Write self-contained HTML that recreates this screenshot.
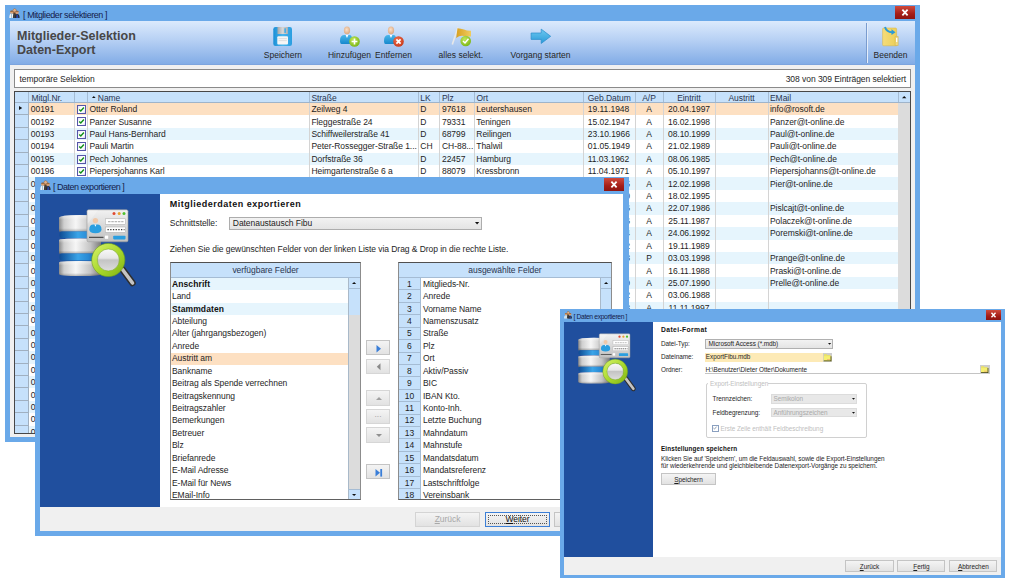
<!DOCTYPE html><html><head><meta charset="utf-8"><style>
*{margin:0;padding:0;box-sizing:border-box}
html,body{width:1010px;height:583px;overflow:hidden;background:#fff;font-family:"Liberation Sans", sans-serif;}
div{position:absolute}
.t{white-space:nowrap;line-height:1;color:#1e1e1e}
svg{position:absolute;overflow:visible}
</style></head><body><div style="left:5px;top:5px;width:915px;height:437px;background:#6aa9e9"></div>
<div style="left:10px;top:21px;width:905px;height:416px;background:#f0f0f0"></div>
<div style="left:10px;top:21px;width:905px;height:43.6px;background:linear-gradient(#dceafc,#b6d0f4 45%,#82ace6);border-bottom:1px solid #7ca4de"></div>
<div class="t" style="left:17px;top:29.7px;font-size:12.5px;letter-spacing:0px;font-weight:bold;color:#474747">Mitglieder-Selektion</div>
<div class="t" style="left:17px;top:43.6px;font-size:12.5px;letter-spacing:0px;font-weight:bold;color:#474747">Daten-Export</div>
<svg style="left:9px;top:8px" width="12.0" height="10.0" viewBox="0 0 12 10">
<ellipse cx="5.6" cy="3.6" rx="2.1" ry="3.2" fill="#9a6a40"/>
<path d="M0.3 10 Q0.3 5.6 2.6 5.6 Q5 5.6 5 10Z" fill="#f2f2f2"/>
<rect x="2.3" y="6" width="0.7" height="4" fill="#7ab0d0"/>
<circle cx="2.6" cy="4.2" r="1.5" fill="#d8a070"/>
<path d="M1.1 3.8 Q1.3 2.5 2.6 2.5 Q4 2.5 4.1 3.8Z" fill="#8a5a30"/>
<path d="M3.9 10 Q3.9 5 5.6 5 Q7.4 5 7.4 10Z" fill="#3c3c3c"/>
<circle cx="5.6" cy="2.4" r="1.4" fill="#e0b08a"/>
<path d="M6 10 Q6 6 8.2 6 Q10.6 6 10.6 10Z" fill="#2a2a30"/>
<path d="M7.2 10 Q7.2 6.6 8.2 6.6 Q9.3 6.6 9.3 10Z" fill="#2848a8"/>
<circle cx="8.1" cy="4.4" r="1.6" fill="#d49a70"/>
<path d="M6.5 4 Q6.6 2.7 8.1 2.7 Q9.7 2.7 9.7 4Z" fill="#9a6a40"/>
</svg>
<div class="t" style="left:23px;top:10.6px;font-size:9px;letter-spacing:-0.42px;color:#15204a">[ Mitglieder selektieren ]</div>
<div style="left:895px;top:6px;width:20px;height:13px;background:linear-gradient(#d04a3c,#a41e18 60%,#8e1410);"><svg style="left:0;top:0" width="20" height="13"><path d="M7.390000000000001 3.71 L12.61 9.29 M12.61 3.71 L7.390000000000001 9.29" stroke="#fff" stroke-width="1.8"/></svg></div>
<div class="t" style="left:232.95px;top:50.6px;font-size:8.5px;letter-spacing:0px;width:100px;text-align:center;color:#262626">Speichern</div>
<div class="t" style="left:299.5px;top:50.6px;font-size:8.5px;letter-spacing:0px;width:100px;text-align:center;color:#262626">Hinzufügen</div>
<div class="t" style="left:343.5px;top:50.6px;font-size:8.5px;letter-spacing:0px;width:100px;text-align:center;color:#262626">Entfernen</div>
<div class="t" style="left:410.8px;top:50.6px;font-size:8.5px;letter-spacing:0px;width:100px;text-align:center;color:#262626">alles selekt.</div>
<div class="t" style="left:490.54999999999995px;top:50.6px;font-size:8.5px;letter-spacing:0px;width:100px;text-align:center;color:#262626">Vorgang starten</div>
<div class="t" style="left:840.55px;top:50.6px;font-size:8.5px;letter-spacing:0px;width:100px;text-align:center;color:#262626">Beenden</div>
<div style="left:866px;top:23px;width:1px;height:40px;background:#7a9ccf"></div>
<div style="left:867px;top:23px;width:1px;height:40px;background:#e4eefb"></div>
<svg style="left:273px;top:27px" width="19" height="19" viewBox="0 0 19 19">
<defs><linearGradient id="fl" x1="0" x2="1"><stop offset="0" stop-color="#1b8fd6"/><stop offset="0.5" stop-color="#49b6ee"/><stop offset="1" stop-color="#2a9de0"/></linearGradient>
<linearGradient id="sh" x1="0" x2="1"><stop offset="0" stop-color="#a8a8a8"/><stop offset="0.5" stop-color="#d8d8d8"/><stop offset="1" stop-color="#b0b0b0"/></linearGradient></defs>
<rect x="0.3" y="0" width="18.7" height="19" rx="2.2" fill="url(#fl)"/>
<rect x="4.5" y="0" width="10.4" height="7" fill="url(#sh)"/>
<rect x="11.3" y="1.3" width="1.7" height="4.6" fill="#4aaee6"/>
<rect x="4.3" y="9.2" width="10.7" height="8.4" rx="1" fill="#f6f6f6"/>
<path d="M5.5 11.6 H13.8 M5.5 13.6 H13.8" stroke="#d6d6d6" stroke-width="0.8"/>
</svg>
<svg style="left:340px;top:26px" width="22" height="20" viewBox="0 0 22 20">
<defs><radialGradient id="hd340" cx="0.45" cy="0.4" r="0.6"><stop offset="0" stop-color="#fbe0c8"/><stop offset="1" stop-color="#dba880"/></radialGradient>
<linearGradient id="bd340" x1="0" y1="0" x2="0" y2="1"><stop offset="0" stop-color="#4ab6ea"/><stop offset="1" stop-color="#1688cc"/></linearGradient></defs>
<ellipse cx="7" cy="4.4" rx="3.1" ry="3.8" fill="url(#hd340)"/>
<path d="M0 14.5 Q0 9 4.5 9 L9.5 9 Q12 9 12 13 L12 18 L1.5 18 Q0 18 0 14.5Z" fill="url(#bd340)"/>
<path d="M5.6 9 L7 12 L8.4 9Z" fill="#fff"/>
</svg>
<svg style="left:349px;top:35.5px" width="11" height="11" viewBox="0 0 11 11"><defs><radialGradient id="gc" cx="0.4" cy="0.35" r="0.7"><stop offset="0" stop-color="#c4e85a"/><stop offset="1" stop-color="#78b414"/></radialGradient></defs><circle cx="5.5" cy="5.5" r="5.3" fill="url(#gc)"/><path d="M5.5 2.6 V8.4 M2.6 5.5 H8.4" stroke="#fff" stroke-width="1.6"/></svg>
<svg style="left:384px;top:26px" width="22" height="20" viewBox="0 0 22 20">
<defs><radialGradient id="hd384" cx="0.45" cy="0.4" r="0.6"><stop offset="0" stop-color="#fbe0c8"/><stop offset="1" stop-color="#dba880"/></radialGradient>
<linearGradient id="bd384" x1="0" y1="0" x2="0" y2="1"><stop offset="0" stop-color="#4ab6ea"/><stop offset="1" stop-color="#1688cc"/></linearGradient></defs>
<ellipse cx="7" cy="4.4" rx="3.1" ry="3.8" fill="url(#hd384)"/>
<path d="M0 14.5 Q0 9 4.5 9 L9.5 9 Q12 9 12 13 L12 18 L1.5 18 Q0 18 0 14.5Z" fill="url(#bd384)"/>
<path d="M5.6 9 L7 12 L8.4 9Z" fill="#fff"/>
</svg>
<svg style="left:393px;top:35.5px" width="11" height="11" viewBox="0 0 11 11"><defs><radialGradient id="rc" cx="0.4" cy="0.35" r="0.7"><stop offset="0" stop-color="#f07050"/><stop offset="1" stop-color="#c83818"/></radialGradient></defs><circle cx="5.5" cy="5.5" r="5.3" fill="url(#rc)"/><path d="M3.4 3.4 L7.6 7.6 M7.6 3.4 L3.4 7.6" stroke="#fff" stroke-width="1.7"/></svg>
<svg style="left:450px;top:26px" width="24" height="21" viewBox="0 0 24 21">
<defs><linearGradient id="fg" x1="0" x2="1"><stop offset="0" stop-color="#d8a020"/><stop offset="1" stop-color="#f0cc60"/></linearGradient>
<radialGradient id="gc2" cx="0.4" cy="0.35" r="0.7"><stop offset="0" stop-color="#c4e85a"/><stop offset="1" stop-color="#78b414"/></radialGradient></defs>
<path d="M2.3 18.6 L8 1.3" stroke="#e8e8e8" stroke-width="1.6"/>
<path d="M7.5 2.3 Q11 2.5 14 3.5 Q17 5 21 4.8 L21 10.5 Q17 10.8 14 10 Q10 9 6.2 12Z" fill="url(#fg)"/>
<circle cx="15.7" cy="15" r="5.3" fill="url(#gc2)"/>
<path d="M13 15 L15 17 L18.5 12.8" stroke="#fff" stroke-width="1.5" fill="none"/>
</svg>
<svg style="left:530px;top:28px" width="22" height="17" viewBox="0 0 22 17">
<defs><linearGradient id="ar" x1="0" y1="0" x2="0" y2="1"><stop offset="0" stop-color="#6cc8f0"/><stop offset="1" stop-color="#2a9ad8"/></linearGradient></defs>
<path d="M1.1 5 H11.2 V1.1 L20.7 8.3 L11.2 15.5 V11.4 H1.1Z" fill="url(#ar)" stroke="#2a8ccc" stroke-width="0.7" stroke-linejoin="round"/>
</svg>
<svg style="left:881px;top:26px" width="20" height="21" viewBox="0 0 20 21">
<defs><linearGradient id="dr" x1="0" x2="1"><stop offset="0" stop-color="#f6dc7a"/><stop offset="1" stop-color="#eccf58"/></linearGradient></defs>
<path d="M1.6 3 Q1.6 2 2.6 2 L14.5 2 Q15.6 2 15.6 3 L15.6 19.8 L2.6 19.8 Q1.6 19.8 1.6 18.8Z" fill="url(#dr)" stroke="#d8b440" stroke-width="0.5"/>
<path d="M14.2 10.5 L17.2 10.5 L17.2 19.5 L14.2 19.5Z" fill="#f2da80" stroke="#d0b048" stroke-width="0.5"/>
<rect x="15.1" y="12" width="1.2" height="4" fill="#fff"/>
<path d="M4 1 Q5.5 6 11 6.2" stroke="#2a9ad8" stroke-width="2" fill="none"/>
<path d="M10.5 3.2 L14.5 6.3 L10.5 9Z" fill="#2a9ad8"/>
</svg>
<div style="left:14px;top:69px;width:897px;height:19px;background:#fff;border:1px solid #8a8a8a"></div>
<div class="t" style="left:19.5px;top:74.7px;font-size:8.5px;letter-spacing:-0.05px;">temporäre Selektion</div>
<div class="t" style="left:600px;top:74.7px;font-size:8.5px;letter-spacing:-0.05px;width:306px;text-align:right;">308 von 309 Einträgen selektiert</div>
<div style="left:14px;top:91px;width:897px;height:343px;background:#fff;border:1px solid #474747"></div>
<div style="left:15px;top:92px;width:895px;height:11px;background:#c6e1fb;border-bottom:1px solid #9fb4ca"></div>
<div style="left:0;top:0;width:1010px;height:433px;overflow:hidden"><div style="left:29px;top:103.00px;width:869px;height:12.41px;background:#fde0c2"></div><div style="left:15px;top:103.00px;width:13px;height:12.41px;background:#c6e1fb;border-bottom:1px solid #a0b0c0"></div><div class="t" style="left:30.8px;top:105.2px;font-size:8.5px;letter-spacing:-0.05px;">00191</div><div class="t" style="left:89.5px;top:105.2px;font-size:8.5px;letter-spacing:-0.05px;">Otter Roland</div><div class="t" style="left:311.4px;top:105.2px;font-size:8.5px;letter-spacing:-0.05px;">Zeilweg 4</div><div class="t" style="left:420.3px;top:105.2px;font-size:8.5px;letter-spacing:-0.05px;">D</div><div class="t" style="left:442px;top:105.2px;font-size:8.5px;letter-spacing:-0.05px;">97618</div><div class="t" style="left:476.3px;top:105.2px;font-size:8.5px;letter-spacing:-0.05px;">Leutershausen</div><div class="t" style="left:587.8px;top:105.2px;font-size:8.5px;letter-spacing:-0.05px;">19.11.1948</div><div class="t" style="left:770px;top:105.2px;font-size:8.5px;letter-spacing:-0.05px;">info@rosoft.de</div><div class="t" style="left:635px;top:105.2px;font-size:8.5px;letter-spacing:-0.05px;width:28px;text-align:center;">A</div><div class="t" style="left:663px;top:105.2px;font-size:8.5px;letter-spacing:-0.05px;width:52px;text-align:center;">20.04.1997</div><div style="left:76.8px;top:104.90px;width:9px;height:9px;border:1px solid #5656a8;background:linear-gradient(135deg,#e4e4f0,#fff 40%,#fff 70%,#d8d8ec)"><svg style="left:0;top:0" width="7" height="7" viewBox="0 0 7 7"><path d="M1.2 3.5 L2.8 5 L5.9 1.6" stroke="#12901a" stroke-width="1.5" fill="none"/></svg></div><div style="left:29px;top:115.41px;width:869px;height:12.41px;background:#fff"></div><div style="left:15px;top:115.41px;width:13px;height:12.41px;background:#c6e1fb;border-bottom:1px solid #a0b0c0"></div><div class="t" style="left:30.8px;top:117.61px;font-size:8.5px;letter-spacing:-0.05px;">00192</div><div class="t" style="left:89.5px;top:117.61px;font-size:8.5px;letter-spacing:-0.05px;">Panzer Susanne</div><div class="t" style="left:311.4px;top:117.61px;font-size:8.5px;letter-spacing:-0.05px;">Fleggestraße 24</div><div class="t" style="left:420.3px;top:117.61px;font-size:8.5px;letter-spacing:-0.05px;">D</div><div class="t" style="left:442px;top:117.61px;font-size:8.5px;letter-spacing:-0.05px;">79331</div><div class="t" style="left:476.3px;top:117.61px;font-size:8.5px;letter-spacing:-0.05px;">Teningen</div><div class="t" style="left:587.8px;top:117.61px;font-size:8.5px;letter-spacing:-0.05px;">15.02.1947</div><div class="t" style="left:770px;top:117.61px;font-size:8.5px;letter-spacing:-0.05px;">Panzer@t-online.de</div><div class="t" style="left:635px;top:117.61px;font-size:8.5px;letter-spacing:-0.05px;width:28px;text-align:center;">A</div><div class="t" style="left:663px;top:117.61px;font-size:8.5px;letter-spacing:-0.05px;width:52px;text-align:center;">16.02.1998</div><div style="left:76.8px;top:117.31px;width:9px;height:9px;border:1px solid #5656a8;background:linear-gradient(135deg,#e4e4f0,#fff 40%,#fff 70%,#d8d8ec)"><svg style="left:0;top:0" width="7" height="7" viewBox="0 0 7 7"><path d="M1.2 3.5 L2.8 5 L5.9 1.6" stroke="#12901a" stroke-width="1.5" fill="none"/></svg></div><div style="left:29px;top:127.82px;width:869px;height:12.41px;background:#e6f5fd"></div><div style="left:15px;top:127.82px;width:13px;height:12.41px;background:#c6e1fb;border-bottom:1px solid #a0b0c0"></div><div class="t" style="left:30.8px;top:130.02px;font-size:8.5px;letter-spacing:-0.05px;">00193</div><div class="t" style="left:89.5px;top:130.02px;font-size:8.5px;letter-spacing:-0.05px;">Paul Hans-Bernhard</div><div class="t" style="left:311.4px;top:130.02px;font-size:8.5px;letter-spacing:-0.05px;">Schiffweilerstraße 41</div><div class="t" style="left:420.3px;top:130.02px;font-size:8.5px;letter-spacing:-0.05px;">D</div><div class="t" style="left:442px;top:130.02px;font-size:8.5px;letter-spacing:-0.05px;">68799</div><div class="t" style="left:476.3px;top:130.02px;font-size:8.5px;letter-spacing:-0.05px;">Reilingen</div><div class="t" style="left:587.8px;top:130.02px;font-size:8.5px;letter-spacing:-0.05px;">23.10.1966</div><div class="t" style="left:770px;top:130.02px;font-size:8.5px;letter-spacing:-0.05px;">Paul@t-online.de</div><div class="t" style="left:635px;top:130.02px;font-size:8.5px;letter-spacing:-0.05px;width:28px;text-align:center;">A</div><div class="t" style="left:663px;top:130.02px;font-size:8.5px;letter-spacing:-0.05px;width:52px;text-align:center;">08.10.1999</div><div style="left:76.8px;top:129.72px;width:9px;height:9px;border:1px solid #5656a8;background:linear-gradient(135deg,#e4e4f0,#fff 40%,#fff 70%,#d8d8ec)"><svg style="left:0;top:0" width="7" height="7" viewBox="0 0 7 7"><path d="M1.2 3.5 L2.8 5 L5.9 1.6" stroke="#12901a" stroke-width="1.5" fill="none"/></svg></div><div style="left:29px;top:140.23px;width:869px;height:12.41px;background:#fff"></div><div style="left:15px;top:140.23px;width:13px;height:12.41px;background:#c6e1fb;border-bottom:1px solid #a0b0c0"></div><div class="t" style="left:30.8px;top:142.43px;font-size:8.5px;letter-spacing:-0.05px;">00194</div><div class="t" style="left:89.5px;top:142.43px;font-size:8.5px;letter-spacing:-0.05px;">Pauli Martin</div><div class="t" style="left:311.4px;top:142.43px;font-size:8.5px;letter-spacing:-0.05px;">Peter-Rossegger-Straße 1...</div><div class="t" style="left:420.3px;top:142.43px;font-size:8.5px;letter-spacing:-0.05px;">CH</div><div class="t" style="left:442px;top:142.43px;font-size:8.5px;letter-spacing:-0.05px;">CH-88...</div><div class="t" style="left:476.3px;top:142.43px;font-size:8.5px;letter-spacing:-0.05px;">Thalwil</div><div class="t" style="left:587.8px;top:142.43px;font-size:8.5px;letter-spacing:-0.05px;">01.05.1949</div><div class="t" style="left:770px;top:142.43px;font-size:8.5px;letter-spacing:-0.05px;">Pauli@t-online.de</div><div class="t" style="left:635px;top:142.43px;font-size:8.5px;letter-spacing:-0.05px;width:28px;text-align:center;">A</div><div class="t" style="left:663px;top:142.43px;font-size:8.5px;letter-spacing:-0.05px;width:52px;text-align:center;">21.02.1989</div><div style="left:76.8px;top:142.13px;width:9px;height:9px;border:1px solid #5656a8;background:linear-gradient(135deg,#e4e4f0,#fff 40%,#fff 70%,#d8d8ec)"><svg style="left:0;top:0" width="7" height="7" viewBox="0 0 7 7"><path d="M1.2 3.5 L2.8 5 L5.9 1.6" stroke="#12901a" stroke-width="1.5" fill="none"/></svg></div><div style="left:29px;top:152.64px;width:869px;height:12.41px;background:#e6f5fd"></div><div style="left:15px;top:152.64px;width:13px;height:12.41px;background:#c6e1fb;border-bottom:1px solid #a0b0c0"></div><div class="t" style="left:30.8px;top:154.84px;font-size:8.5px;letter-spacing:-0.05px;">00195</div><div class="t" style="left:89.5px;top:154.84px;font-size:8.5px;letter-spacing:-0.05px;">Pech Johannes</div><div class="t" style="left:311.4px;top:154.84px;font-size:8.5px;letter-spacing:-0.05px;">Dorfstraße 36</div><div class="t" style="left:420.3px;top:154.84px;font-size:8.5px;letter-spacing:-0.05px;">D</div><div class="t" style="left:442px;top:154.84px;font-size:8.5px;letter-spacing:-0.05px;">22457</div><div class="t" style="left:476.3px;top:154.84px;font-size:8.5px;letter-spacing:-0.05px;">Hamburg</div><div class="t" style="left:587.8px;top:154.84px;font-size:8.5px;letter-spacing:-0.05px;">11.03.1962</div><div class="t" style="left:770px;top:154.84px;font-size:8.5px;letter-spacing:-0.05px;">Pech@t-online.de</div><div class="t" style="left:635px;top:154.84px;font-size:8.5px;letter-spacing:-0.05px;width:28px;text-align:center;">A</div><div class="t" style="left:663px;top:154.84px;font-size:8.5px;letter-spacing:-0.05px;width:52px;text-align:center;">08.06.1985</div><div style="left:76.8px;top:154.54px;width:9px;height:9px;border:1px solid #5656a8;background:linear-gradient(135deg,#e4e4f0,#fff 40%,#fff 70%,#d8d8ec)"><svg style="left:0;top:0" width="7" height="7" viewBox="0 0 7 7"><path d="M1.2 3.5 L2.8 5 L5.9 1.6" stroke="#12901a" stroke-width="1.5" fill="none"/></svg></div><div style="left:29px;top:165.05px;width:869px;height:12.41px;background:#fff"></div><div style="left:15px;top:165.05px;width:13px;height:12.41px;background:#c6e1fb;border-bottom:1px solid #a0b0c0"></div><div class="t" style="left:30.8px;top:167.25px;font-size:8.5px;letter-spacing:-0.05px;">00196</div><div class="t" style="left:89.5px;top:167.25px;font-size:8.5px;letter-spacing:-0.05px;">Piepersjohanns Karl</div><div class="t" style="left:311.4px;top:167.25px;font-size:8.5px;letter-spacing:-0.05px;">Heimgartenstraße 6 a</div><div class="t" style="left:420.3px;top:167.25px;font-size:8.5px;letter-spacing:-0.05px;">D</div><div class="t" style="left:442px;top:167.25px;font-size:8.5px;letter-spacing:-0.05px;">88079</div><div class="t" style="left:476.3px;top:167.25px;font-size:8.5px;letter-spacing:-0.05px;">Kressbronn</div><div class="t" style="left:587.8px;top:167.25px;font-size:8.5px;letter-spacing:-0.05px;">11.04.1971</div><div class="t" style="left:770px;top:167.25px;font-size:8.5px;letter-spacing:-0.05px;">Piepersjohanns@t-online.de</div><div class="t" style="left:635px;top:167.25px;font-size:8.5px;letter-spacing:-0.05px;width:28px;text-align:center;">A</div><div class="t" style="left:663px;top:167.25px;font-size:8.5px;letter-spacing:-0.05px;width:52px;text-align:center;">05.10.1997</div><div style="left:76.8px;top:166.95px;width:9px;height:9px;border:1px solid #5656a8;background:linear-gradient(135deg,#e4e4f0,#fff 40%,#fff 70%,#d8d8ec)"><svg style="left:0;top:0" width="7" height="7" viewBox="0 0 7 7"><path d="M1.2 3.5 L2.8 5 L5.9 1.6" stroke="#12901a" stroke-width="1.5" fill="none"/></svg></div><div style="left:29px;top:177.46px;width:869px;height:12.41px;background:#e6f5fd"></div><div style="left:15px;top:177.46px;width:13px;height:12.41px;background:#c6e1fb;border-bottom:1px solid #a0b0c0"></div><div class="t" style="left:30.8px;top:179.66px;font-size:8.5px;letter-spacing:-0.05px;">00197</div><div class="t" style="left:587.8px;top:179.66px;font-size:8.5px;letter-spacing:-0.05px;">12.03.1955</div><div class="t" style="left:770px;top:179.66px;font-size:8.5px;letter-spacing:-0.05px;">Pier@t-online.de</div><div class="t" style="left:635px;top:179.66px;font-size:8.5px;letter-spacing:-0.05px;width:28px;text-align:center;">A</div><div class="t" style="left:663px;top:179.66px;font-size:8.5px;letter-spacing:-0.05px;width:52px;text-align:center;">12.02.1998</div><div style="left:76.8px;top:179.36px;width:9px;height:9px;border:1px solid #5656a8;background:linear-gradient(135deg,#e4e4f0,#fff 40%,#fff 70%,#d8d8ec)"><svg style="left:0;top:0" width="7" height="7" viewBox="0 0 7 7"><path d="M1.2 3.5 L2.8 5 L5.9 1.6" stroke="#12901a" stroke-width="1.5" fill="none"/></svg></div><div style="left:29px;top:189.87px;width:869px;height:12.41px;background:#fff"></div><div style="left:15px;top:189.87px;width:13px;height:12.41px;background:#c6e1fb;border-bottom:1px solid #a0b0c0"></div><div class="t" style="left:30.8px;top:192.07px;font-size:8.5px;letter-spacing:-0.05px;">00198</div><div class="t" style="left:587.8px;top:192.07px;font-size:8.5px;letter-spacing:-0.05px;">07.09.1960</div><div class="t" style="left:635px;top:192.07px;font-size:8.5px;letter-spacing:-0.05px;width:28px;text-align:center;">A</div><div class="t" style="left:663px;top:192.07px;font-size:8.5px;letter-spacing:-0.05px;width:52px;text-align:center;">18.02.1995</div><div style="left:76.8px;top:191.77px;width:9px;height:9px;border:1px solid #5656a8;background:linear-gradient(135deg,#e4e4f0,#fff 40%,#fff 70%,#d8d8ec)"><svg style="left:0;top:0" width="7" height="7" viewBox="0 0 7 7"><path d="M1.2 3.5 L2.8 5 L5.9 1.6" stroke="#12901a" stroke-width="1.5" fill="none"/></svg></div><div style="left:29px;top:202.28px;width:869px;height:12.41px;background:#e6f5fd"></div><div style="left:15px;top:202.28px;width:13px;height:12.41px;background:#c6e1fb;border-bottom:1px solid #a0b0c0"></div><div class="t" style="left:30.8px;top:204.48px;font-size:8.5px;letter-spacing:-0.05px;">00199</div><div class="t" style="left:587.8px;top:204.48px;font-size:8.5px;letter-spacing:-0.05px;">14.06.1976</div><div class="t" style="left:770px;top:204.48px;font-size:8.5px;letter-spacing:-0.05px;">Pislcajt@t-online.de</div><div class="t" style="left:635px;top:204.48px;font-size:8.5px;letter-spacing:-0.05px;width:28px;text-align:center;">A</div><div class="t" style="left:663px;top:204.48px;font-size:8.5px;letter-spacing:-0.05px;width:52px;text-align:center;">22.07.1986</div><div style="left:76.8px;top:204.18px;width:9px;height:9px;border:1px solid #5656a8;background:linear-gradient(135deg,#e4e4f0,#fff 40%,#fff 70%,#d8d8ec)"><svg style="left:0;top:0" width="7" height="7" viewBox="0 0 7 7"><path d="M1.2 3.5 L2.8 5 L5.9 1.6" stroke="#12901a" stroke-width="1.5" fill="none"/></svg></div><div style="left:29px;top:214.69px;width:869px;height:12.41px;background:#fff"></div><div style="left:15px;top:214.69px;width:13px;height:12.41px;background:#c6e1fb;border-bottom:1px solid #a0b0c0"></div><div class="t" style="left:30.8px;top:216.89px;font-size:8.5px;letter-spacing:-0.05px;">00200</div><div class="t" style="left:587.8px;top:216.89px;font-size:8.5px;letter-spacing:-0.05px;">25.12.1956</div><div class="t" style="left:770px;top:216.89px;font-size:8.5px;letter-spacing:-0.05px;">Polaczek@t-online.de</div><div class="t" style="left:635px;top:216.89px;font-size:8.5px;letter-spacing:-0.05px;width:28px;text-align:center;">A</div><div class="t" style="left:663px;top:216.89px;font-size:8.5px;letter-spacing:-0.05px;width:52px;text-align:center;">25.11.1987</div><div style="left:76.8px;top:216.59px;width:9px;height:9px;border:1px solid #5656a8;background:linear-gradient(135deg,#e4e4f0,#fff 40%,#fff 70%,#d8d8ec)"><svg style="left:0;top:0" width="7" height="7" viewBox="0 0 7 7"><path d="M1.2 3.5 L2.8 5 L5.9 1.6" stroke="#12901a" stroke-width="1.5" fill="none"/></svg></div><div style="left:29px;top:227.10px;width:869px;height:12.41px;background:#e6f5fd"></div><div style="left:15px;top:227.10px;width:13px;height:12.41px;background:#c6e1fb;border-bottom:1px solid #a0b0c0"></div><div class="t" style="left:30.8px;top:229.3px;font-size:8.5px;letter-spacing:-0.05px;">00201</div><div class="t" style="left:587.8px;top:229.3px;font-size:8.5px;letter-spacing:-0.05px;">30.01.1964</div><div class="t" style="left:770px;top:229.3px;font-size:8.5px;letter-spacing:-0.05px;">Poremski@t-online.de</div><div class="t" style="left:635px;top:229.3px;font-size:8.5px;letter-spacing:-0.05px;width:28px;text-align:center;">A</div><div class="t" style="left:663px;top:229.3px;font-size:8.5px;letter-spacing:-0.05px;width:52px;text-align:center;">24.06.1992</div><div style="left:76.8px;top:229.00px;width:9px;height:9px;border:1px solid #5656a8;background:linear-gradient(135deg,#e4e4f0,#fff 40%,#fff 70%,#d8d8ec)"><svg style="left:0;top:0" width="7" height="7" viewBox="0 0 7 7"><path d="M1.2 3.5 L2.8 5 L5.9 1.6" stroke="#12901a" stroke-width="1.5" fill="none"/></svg></div><div style="left:29px;top:239.51px;width:869px;height:12.41px;background:#fff"></div><div style="left:15px;top:239.51px;width:13px;height:12.41px;background:#c6e1fb;border-bottom:1px solid #a0b0c0"></div><div class="t" style="left:30.8px;top:241.71px;font-size:8.5px;letter-spacing:-0.05px;">00202</div><div class="t" style="left:587.8px;top:241.71px;font-size:8.5px;letter-spacing:-0.05px;">02.08.1942</div><div class="t" style="left:635px;top:241.71px;font-size:8.5px;letter-spacing:-0.05px;width:28px;text-align:center;">A</div><div class="t" style="left:663px;top:241.71px;font-size:8.5px;letter-spacing:-0.05px;width:52px;text-align:center;">19.11.1989</div><div style="left:76.8px;top:241.41px;width:9px;height:9px;border:1px solid #5656a8;background:linear-gradient(135deg,#e4e4f0,#fff 40%,#fff 70%,#d8d8ec)"><svg style="left:0;top:0" width="7" height="7" viewBox="0 0 7 7"><path d="M1.2 3.5 L2.8 5 L5.9 1.6" stroke="#12901a" stroke-width="1.5" fill="none"/></svg></div><div style="left:29px;top:251.92px;width:869px;height:12.41px;background:#e6f5fd"></div><div style="left:15px;top:251.92px;width:13px;height:12.41px;background:#c6e1fb;border-bottom:1px solid #a0b0c0"></div><div class="t" style="left:30.8px;top:254.12px;font-size:8.5px;letter-spacing:-0.05px;">00203</div><div class="t" style="left:587.8px;top:254.12px;font-size:8.5px;letter-spacing:-0.05px;">19.04.1958</div><div class="t" style="left:770px;top:254.12px;font-size:8.5px;letter-spacing:-0.05px;">Prange@t-online.de</div><div class="t" style="left:635px;top:254.12px;font-size:8.5px;letter-spacing:-0.05px;width:28px;text-align:center;">P</div><div class="t" style="left:663px;top:254.12px;font-size:8.5px;letter-spacing:-0.05px;width:52px;text-align:center;">03.03.1998</div><div style="left:76.8px;top:253.82px;width:9px;height:9px;border:1px solid #5656a8;background:linear-gradient(135deg,#e4e4f0,#fff 40%,#fff 70%,#d8d8ec)"><svg style="left:0;top:0" width="7" height="7" viewBox="0 0 7 7"><path d="M1.2 3.5 L2.8 5 L5.9 1.6" stroke="#12901a" stroke-width="1.5" fill="none"/></svg></div><div style="left:29px;top:264.33px;width:869px;height:12.41px;background:#fff"></div><div style="left:15px;top:264.33px;width:13px;height:12.41px;background:#c6e1fb;border-bottom:1px solid #a0b0c0"></div><div class="t" style="left:30.8px;top:266.53px;font-size:8.5px;letter-spacing:-0.05px;">00204</div><div class="t" style="left:587.8px;top:266.53px;font-size:8.5px;letter-spacing:-0.05px;">11.11.1965</div><div class="t" style="left:770px;top:266.53px;font-size:8.5px;letter-spacing:-0.05px;">Praski@t-online.de</div><div class="t" style="left:635px;top:266.53px;font-size:8.5px;letter-spacing:-0.05px;width:28px;text-align:center;">A</div><div class="t" style="left:663px;top:266.53px;font-size:8.5px;letter-spacing:-0.05px;width:52px;text-align:center;">16.11.1988</div><div style="left:76.8px;top:266.23px;width:9px;height:9px;border:1px solid #5656a8;background:linear-gradient(135deg,#e4e4f0,#fff 40%,#fff 70%,#d8d8ec)"><svg style="left:0;top:0" width="7" height="7" viewBox="0 0 7 7"><path d="M1.2 3.5 L2.8 5 L5.9 1.6" stroke="#12901a" stroke-width="1.5" fill="none"/></svg></div><div style="left:29px;top:276.74px;width:869px;height:12.41px;background:#e6f5fd"></div><div style="left:15px;top:276.74px;width:13px;height:12.41px;background:#c6e1fb;border-bottom:1px solid #a0b0c0"></div><div class="t" style="left:30.8px;top:278.94px;font-size:8.5px;letter-spacing:-0.05px;">00205</div><div class="t" style="left:587.8px;top:278.94px;font-size:8.5px;letter-spacing:-0.05px;">05.05.1959</div><div class="t" style="left:770px;top:278.94px;font-size:8.5px;letter-spacing:-0.05px;">Prelle@t-online.de</div><div class="t" style="left:635px;top:278.94px;font-size:8.5px;letter-spacing:-0.05px;width:28px;text-align:center;">A</div><div class="t" style="left:663px;top:278.94px;font-size:8.5px;letter-spacing:-0.05px;width:52px;text-align:center;">25.07.1990</div><div style="left:76.8px;top:278.64px;width:9px;height:9px;border:1px solid #5656a8;background:linear-gradient(135deg,#e4e4f0,#fff 40%,#fff 70%,#d8d8ec)"><svg style="left:0;top:0" width="7" height="7" viewBox="0 0 7 7"><path d="M1.2 3.5 L2.8 5 L5.9 1.6" stroke="#12901a" stroke-width="1.5" fill="none"/></svg></div><div style="left:29px;top:289.15px;width:869px;height:12.41px;background:#fff"></div><div style="left:15px;top:289.15px;width:13px;height:12.41px;background:#c6e1fb;border-bottom:1px solid #a0b0c0"></div><div class="t" style="left:30.8px;top:291.35px;font-size:8.5px;letter-spacing:-0.05px;">00206</div><div class="t" style="left:587.8px;top:291.35px;font-size:8.5px;letter-spacing:-0.05px;">22.02.1952</div><div class="t" style="left:635px;top:291.35px;font-size:8.5px;letter-spacing:-0.05px;width:28px;text-align:center;">A</div><div class="t" style="left:663px;top:291.35px;font-size:8.5px;letter-spacing:-0.05px;width:52px;text-align:center;">03.06.1988</div><div style="left:76.8px;top:291.05px;width:9px;height:9px;border:1px solid #5656a8;background:linear-gradient(135deg,#e4e4f0,#fff 40%,#fff 70%,#d8d8ec)"><svg style="left:0;top:0" width="7" height="7" viewBox="0 0 7 7"><path d="M1.2 3.5 L2.8 5 L5.9 1.6" stroke="#12901a" stroke-width="1.5" fill="none"/></svg></div><div style="left:29px;top:301.56px;width:869px;height:12.41px;background:#e6f5fd"></div><div style="left:15px;top:301.56px;width:13px;height:12.41px;background:#c6e1fb;border-bottom:1px solid #a0b0c0"></div><div class="t" style="left:30.8px;top:303.76px;font-size:8.5px;letter-spacing:-0.05px;">00207</div><div class="t" style="left:587.8px;top:303.76px;font-size:8.5px;letter-spacing:-0.05px;">13.10.1968</div><div class="t" style="left:635px;top:303.76px;font-size:8.5px;letter-spacing:-0.05px;width:28px;text-align:center;">A</div><div class="t" style="left:663px;top:303.76px;font-size:8.5px;letter-spacing:-0.05px;width:52px;text-align:center;">11.11.1997</div><div style="left:76.8px;top:303.46px;width:9px;height:9px;border:1px solid #5656a8;background:linear-gradient(135deg,#e4e4f0,#fff 40%,#fff 70%,#d8d8ec)"><svg style="left:0;top:0" width="7" height="7" viewBox="0 0 7 7"><path d="M1.2 3.5 L2.8 5 L5.9 1.6" stroke="#12901a" stroke-width="1.5" fill="none"/></svg></div><div style="left:29px;top:313.97px;width:869px;height:12.41px;background:#fff"></div><div style="left:15px;top:313.97px;width:13px;height:12.41px;background:#c6e1fb;border-bottom:1px solid #a0b0c0"></div><div class="t" style="left:30.8px;top:316.17px;font-size:8.5px;letter-spacing:-0.05px;">00208</div><div class="t" style="left:587.8px;top:316.17px;font-size:8.5px;letter-spacing:-0.05px;">01.01.1950</div><div class="t" style="left:635px;top:316.17px;font-size:8.5px;letter-spacing:-0.05px;width:28px;text-align:center;">A</div><div class="t" style="left:663px;top:316.17px;font-size:8.5px;letter-spacing:-0.05px;width:52px;text-align:center;">01.01.1990</div><div style="left:76.8px;top:315.87px;width:9px;height:9px;border:1px solid #5656a8;background:linear-gradient(135deg,#e4e4f0,#fff 40%,#fff 70%,#d8d8ec)"><svg style="left:0;top:0" width="7" height="7" viewBox="0 0 7 7"><path d="M1.2 3.5 L2.8 5 L5.9 1.6" stroke="#12901a" stroke-width="1.5" fill="none"/></svg></div><div style="left:29px;top:326.38px;width:869px;height:12.41px;background:#e6f5fd"></div><div style="left:15px;top:326.38px;width:13px;height:12.41px;background:#c6e1fb;border-bottom:1px solid #a0b0c0"></div><div class="t" style="left:30.8px;top:328.58px;font-size:8.5px;letter-spacing:-0.05px;">00209</div><div class="t" style="left:587.8px;top:328.58px;font-size:8.5px;letter-spacing:-0.05px;">01.01.1950</div><div class="t" style="left:635px;top:328.58px;font-size:8.5px;letter-spacing:-0.05px;width:28px;text-align:center;">A</div><div class="t" style="left:663px;top:328.58px;font-size:8.5px;letter-spacing:-0.05px;width:52px;text-align:center;">01.01.1990</div><div style="left:76.8px;top:328.28px;width:9px;height:9px;border:1px solid #5656a8;background:linear-gradient(135deg,#e4e4f0,#fff 40%,#fff 70%,#d8d8ec)"><svg style="left:0;top:0" width="7" height="7" viewBox="0 0 7 7"><path d="M1.2 3.5 L2.8 5 L5.9 1.6" stroke="#12901a" stroke-width="1.5" fill="none"/></svg></div><div style="left:29px;top:338.79px;width:869px;height:12.41px;background:#fff"></div><div style="left:15px;top:338.79px;width:13px;height:12.41px;background:#c6e1fb;border-bottom:1px solid #a0b0c0"></div><div class="t" style="left:30.8px;top:340.99px;font-size:8.5px;letter-spacing:-0.05px;">00210</div><div class="t" style="left:587.8px;top:340.99px;font-size:8.5px;letter-spacing:-0.05px;">01.01.1950</div><div class="t" style="left:635px;top:340.99px;font-size:8.5px;letter-spacing:-0.05px;width:28px;text-align:center;">A</div><div class="t" style="left:663px;top:340.99px;font-size:8.5px;letter-spacing:-0.05px;width:52px;text-align:center;">01.01.1990</div><div style="left:76.8px;top:340.69px;width:9px;height:9px;border:1px solid #5656a8;background:linear-gradient(135deg,#e4e4f0,#fff 40%,#fff 70%,#d8d8ec)"><svg style="left:0;top:0" width="7" height="7" viewBox="0 0 7 7"><path d="M1.2 3.5 L2.8 5 L5.9 1.6" stroke="#12901a" stroke-width="1.5" fill="none"/></svg></div><div style="left:29px;top:351.20px;width:869px;height:12.41px;background:#e6f5fd"></div><div style="left:15px;top:351.20px;width:13px;height:12.41px;background:#c6e1fb;border-bottom:1px solid #a0b0c0"></div><div class="t" style="left:30.8px;top:353.4px;font-size:8.5px;letter-spacing:-0.05px;">00211</div><div class="t" style="left:587.8px;top:353.4px;font-size:8.5px;letter-spacing:-0.05px;">01.01.1950</div><div class="t" style="left:635px;top:353.4px;font-size:8.5px;letter-spacing:-0.05px;width:28px;text-align:center;">A</div><div class="t" style="left:663px;top:353.4px;font-size:8.5px;letter-spacing:-0.05px;width:52px;text-align:center;">01.01.1990</div><div style="left:76.8px;top:353.10px;width:9px;height:9px;border:1px solid #5656a8;background:linear-gradient(135deg,#e4e4f0,#fff 40%,#fff 70%,#d8d8ec)"><svg style="left:0;top:0" width="7" height="7" viewBox="0 0 7 7"><path d="M1.2 3.5 L2.8 5 L5.9 1.6" stroke="#12901a" stroke-width="1.5" fill="none"/></svg></div><div style="left:29px;top:363.61px;width:869px;height:12.41px;background:#fff"></div><div style="left:15px;top:363.61px;width:13px;height:12.41px;background:#c6e1fb;border-bottom:1px solid #a0b0c0"></div><div class="t" style="left:30.8px;top:365.81px;font-size:8.5px;letter-spacing:-0.05px;">00212</div><div class="t" style="left:587.8px;top:365.81px;font-size:8.5px;letter-spacing:-0.05px;">01.01.1950</div><div class="t" style="left:635px;top:365.81px;font-size:8.5px;letter-spacing:-0.05px;width:28px;text-align:center;">A</div><div class="t" style="left:663px;top:365.81px;font-size:8.5px;letter-spacing:-0.05px;width:52px;text-align:center;">01.01.1990</div><div style="left:76.8px;top:365.51px;width:9px;height:9px;border:1px solid #5656a8;background:linear-gradient(135deg,#e4e4f0,#fff 40%,#fff 70%,#d8d8ec)"><svg style="left:0;top:0" width="7" height="7" viewBox="0 0 7 7"><path d="M1.2 3.5 L2.8 5 L5.9 1.6" stroke="#12901a" stroke-width="1.5" fill="none"/></svg></div><div style="left:29px;top:376.02px;width:869px;height:12.41px;background:#e6f5fd"></div><div style="left:15px;top:376.02px;width:13px;height:12.41px;background:#c6e1fb;border-bottom:1px solid #a0b0c0"></div><div class="t" style="left:30.8px;top:378.22px;font-size:8.5px;letter-spacing:-0.05px;">00213</div><div class="t" style="left:587.8px;top:378.22px;font-size:8.5px;letter-spacing:-0.05px;">01.01.1950</div><div class="t" style="left:635px;top:378.22px;font-size:8.5px;letter-spacing:-0.05px;width:28px;text-align:center;">A</div><div class="t" style="left:663px;top:378.22px;font-size:8.5px;letter-spacing:-0.05px;width:52px;text-align:center;">01.01.1990</div><div style="left:76.8px;top:377.92px;width:9px;height:9px;border:1px solid #5656a8;background:linear-gradient(135deg,#e4e4f0,#fff 40%,#fff 70%,#d8d8ec)"><svg style="left:0;top:0" width="7" height="7" viewBox="0 0 7 7"><path d="M1.2 3.5 L2.8 5 L5.9 1.6" stroke="#12901a" stroke-width="1.5" fill="none"/></svg></div><div style="left:29px;top:388.43px;width:869px;height:12.41px;background:#fff"></div><div style="left:15px;top:388.43px;width:13px;height:12.41px;background:#c6e1fb;border-bottom:1px solid #a0b0c0"></div><div class="t" style="left:30.8px;top:390.63px;font-size:8.5px;letter-spacing:-0.05px;">00214</div><div class="t" style="left:587.8px;top:390.63px;font-size:8.5px;letter-spacing:-0.05px;">01.01.1950</div><div class="t" style="left:635px;top:390.63px;font-size:8.5px;letter-spacing:-0.05px;width:28px;text-align:center;">A</div><div class="t" style="left:663px;top:390.63px;font-size:8.5px;letter-spacing:-0.05px;width:52px;text-align:center;">01.01.1990</div><div style="left:76.8px;top:390.33px;width:9px;height:9px;border:1px solid #5656a8;background:linear-gradient(135deg,#e4e4f0,#fff 40%,#fff 70%,#d8d8ec)"><svg style="left:0;top:0" width="7" height="7" viewBox="0 0 7 7"><path d="M1.2 3.5 L2.8 5 L5.9 1.6" stroke="#12901a" stroke-width="1.5" fill="none"/></svg></div><div style="left:29px;top:400.84px;width:869px;height:12.41px;background:#e6f5fd"></div><div style="left:15px;top:400.84px;width:13px;height:12.41px;background:#c6e1fb;border-bottom:1px solid #a0b0c0"></div><div class="t" style="left:30.8px;top:403.04px;font-size:8.5px;letter-spacing:-0.05px;">00215</div><div class="t" style="left:587.8px;top:403.04px;font-size:8.5px;letter-spacing:-0.05px;">01.01.1950</div><div class="t" style="left:635px;top:403.04px;font-size:8.5px;letter-spacing:-0.05px;width:28px;text-align:center;">A</div><div class="t" style="left:663px;top:403.04px;font-size:8.5px;letter-spacing:-0.05px;width:52px;text-align:center;">01.01.1990</div><div style="left:76.8px;top:402.74px;width:9px;height:9px;border:1px solid #5656a8;background:linear-gradient(135deg,#e4e4f0,#fff 40%,#fff 70%,#d8d8ec)"><svg style="left:0;top:0" width="7" height="7" viewBox="0 0 7 7"><path d="M1.2 3.5 L2.8 5 L5.9 1.6" stroke="#12901a" stroke-width="1.5" fill="none"/></svg></div><div style="left:29px;top:413.25px;width:869px;height:12.41px;background:#fff"></div><div style="left:15px;top:413.25px;width:13px;height:12.41px;background:#c6e1fb;border-bottom:1px solid #a0b0c0"></div><div class="t" style="left:30.8px;top:415.45px;font-size:8.5px;letter-spacing:-0.05px;">00216</div><div class="t" style="left:587.8px;top:415.45px;font-size:8.5px;letter-spacing:-0.05px;">01.01.1950</div><div class="t" style="left:635px;top:415.45px;font-size:8.5px;letter-spacing:-0.05px;width:28px;text-align:center;">A</div><div class="t" style="left:663px;top:415.45px;font-size:8.5px;letter-spacing:-0.05px;width:52px;text-align:center;">01.01.1990</div><div style="left:76.8px;top:415.15px;width:9px;height:9px;border:1px solid #5656a8;background:linear-gradient(135deg,#e4e4f0,#fff 40%,#fff 70%,#d8d8ec)"><svg style="left:0;top:0" width="7" height="7" viewBox="0 0 7 7"><path d="M1.2 3.5 L2.8 5 L5.9 1.6" stroke="#12901a" stroke-width="1.5" fill="none"/></svg></div><div style="left:29px;top:425.66px;width:869px;height:12.41px;background:#e6f5fd"></div><div style="left:15px;top:425.66px;width:13px;height:12.41px;background:#c6e1fb;border-bottom:1px solid #a0b0c0"></div><div class="t" style="left:30.8px;top:427.86px;font-size:8.5px;letter-spacing:-0.05px;">00217</div><div class="t" style="left:587.8px;top:427.86px;font-size:8.5px;letter-spacing:-0.05px;">01.01.1950</div><div class="t" style="left:635px;top:427.86px;font-size:8.5px;letter-spacing:-0.05px;width:28px;text-align:center;">A</div><div class="t" style="left:663px;top:427.86px;font-size:8.5px;letter-spacing:-0.05px;width:52px;text-align:center;">01.01.1990</div><div style="left:76.8px;top:427.56px;width:9px;height:9px;border:1px solid #5656a8;background:linear-gradient(135deg,#e4e4f0,#fff 40%,#fff 70%,#d8d8ec)"><svg style="left:0;top:0" width="7" height="7" viewBox="0 0 7 7"><path d="M1.2 3.5 L2.8 5 L5.9 1.6" stroke="#12901a" stroke-width="1.5" fill="none"/></svg></div></div>
<svg style="left:18.9px;top:106.3px" width="4" height="5"><path d="M0 0 L3.2 2 L0 4Z" fill="#111"/></svg>
<div style="left:74px;top:103px;width:1px;height:330px;background:#d4d4d4"></div>
<div style="left:87px;top:103px;width:1px;height:330px;background:#d4d4d4"></div>
<div style="left:309px;top:103px;width:1px;height:330px;background:#d4d4d4"></div>
<div style="left:418px;top:103px;width:1px;height:330px;background:#d4d4d4"></div>
<div style="left:439px;top:103px;width:1px;height:330px;background:#d4d4d4"></div>
<div style="left:474px;top:103px;width:1px;height:330px;background:#d4d4d4"></div>
<div style="left:583px;top:103px;width:1px;height:330px;background:#d4d4d4"></div>
<div style="left:635px;top:103px;width:1px;height:330px;background:#d4d4d4"></div>
<div style="left:663px;top:103px;width:1px;height:330px;background:#d4d4d4"></div>
<div style="left:715px;top:103px;width:1px;height:330px;background:#d4d4d4"></div>
<div style="left:768px;top:103px;width:1px;height:330px;background:#d4d4d4"></div>
<div style="left:28px;top:92px;width:1px;height:10px;background:#a5bcd4"></div>
<div style="left:74px;top:92px;width:1px;height:10px;background:#a5bcd4"></div>
<div style="left:87px;top:92px;width:1px;height:10px;background:#a5bcd4"></div>
<div style="left:309px;top:92px;width:1px;height:10px;background:#a5bcd4"></div>
<div style="left:418px;top:92px;width:1px;height:10px;background:#a5bcd4"></div>
<div style="left:439px;top:92px;width:1px;height:10px;background:#a5bcd4"></div>
<div style="left:474px;top:92px;width:1px;height:10px;background:#a5bcd4"></div>
<div style="left:583px;top:92px;width:1px;height:10px;background:#a5bcd4"></div>
<div style="left:635px;top:92px;width:1px;height:10px;background:#a5bcd4"></div>
<div style="left:663px;top:92px;width:1px;height:10px;background:#a5bcd4"></div>
<div style="left:715px;top:92px;width:1px;height:10px;background:#a5bcd4"></div>
<div style="left:768px;top:92px;width:1px;height:10px;background:#a5bcd4"></div>
<div style="left:898px;top:92px;width:1px;height:10px;background:#a5bcd4"></div>
<div style="left:28px;top:103px;width:1px;height:330px;background:#a0b0c0"></div>
<div style="left:898px;top:103px;width:12px;height:330px;background:#dcdcdc"></div>
<svg style="left:902px;top:95.6px" width="5" height="3"><path d="M0 2.3 L2.2 0 L4.4 2.3Z" fill="#111"/></svg>
<div class="t" style="left:31.4px;top:94px;font-size:8.5px;letter-spacing:-0.05px;color:#2a3550">Mitgl.Nr.</div>
<div class="t" style="left:97.8px;top:94px;font-size:8.5px;letter-spacing:-0.05px;color:#2a3550">Name</div>
<div class="t" style="left:311.4px;top:94px;font-size:8.5px;letter-spacing:-0.05px;color:#2a3550">Straße</div>
<div class="t" style="left:420.3px;top:94px;font-size:8.5px;letter-spacing:-0.05px;color:#2a3550">LK</div>
<div class="t" style="left:442px;top:94px;font-size:8.5px;letter-spacing:-0.05px;color:#2a3550">Plz</div>
<div class="t" style="left:476.5px;top:94px;font-size:8.5px;letter-spacing:-0.05px;color:#2a3550">Ort</div>
<div class="t" style="left:587.8px;top:94px;font-size:8.5px;letter-spacing:-0.05px;color:#2a3550">Geb.Datum</div>
<div class="t" style="left:770px;top:94px;font-size:8.5px;letter-spacing:-0.05px;color:#2a3550">EMail</div>
<svg style="left:91.5px;top:96.3px" width="4" height="2"><path d="M0 2 L1.8 0 L3.6 2Z" fill="#111"/></svg>
<div class="t" style="left:635px;top:94px;font-size:8.5px;letter-spacing:-0.05px;width:28px;text-align:center;color:#2a3550">A/P</div>
<div class="t" style="left:663px;top:94px;font-size:8.5px;letter-spacing:-0.05px;width:52px;text-align:center;color:#2a3550">Eintritt</div>
<div class="t" style="left:715px;top:94px;font-size:8.5px;letter-spacing:-0.05px;width:53px;text-align:center;color:#2a3550">Austritt</div>
<div style="left:35px;top:177px;width:594px;height:359px;background:#6aa9e9"></div>
<div style="left:40px;top:194px;width:583px;height:337px;background:#fff"></div>
<div style="left:40px;top:194px;width:120px;height:313px;background:#204f9e"></div>
<div style="left:40px;top:507px;width:583px;height:24px;background:#f0f0f0"></div>
<svg style="left:40px;top:194px" width="100.0" height="100.0" viewBox="0 0 100 100">
<defs>
<linearGradient id="ds10" x1="0" x2="1"><stop offset="0" stop-color="#8a8a8a"/><stop offset="0.12" stop-color="#cfcfcf"/><stop offset="0.4" stop-color="#f6f6f6"/><stop offset="0.75" stop-color="#c4c4c4"/><stop offset="1" stop-color="#7a7a7a"/></linearGradient>
<linearGradient id="dv10" x1="0" y1="0" x2="0" y2="1"><stop offset="0" stop-color="#fff" stop-opacity="0.5"/><stop offset="0.3" stop-color="#fff" stop-opacity="0"/><stop offset="0.8" stop-color="#000" stop-opacity="0"/><stop offset="1" stop-color="#000" stop-opacity="0.25"/></linearGradient>
<linearGradient id="bb10" x1="0" x2="1"><stop offset="0" stop-color="#0e4c94"/><stop offset="0.45" stop-color="#3aa4e8"/><stop offset="0.7" stop-color="#2a8ad4"/><stop offset="1" stop-color="#0e4c94"/></linearGradient>
<linearGradient id="pn10" x1="0" y1="0" x2="0" y2="1"><stop offset="0" stop-color="#f2f2f2"/><stop offset="1" stop-color="#c0c0c0"/></linearGradient>
<linearGradient id="ln10" x1="0" y1="0" x2="0" y2="1"><stop offset="0" stop-color="#fafafa"/><stop offset="0.42" stop-color="#e6e6e6"/><stop offset="0.5" stop-color="#c4c4c4"/><stop offset="1" stop-color="#dedede"/></linearGradient>
<linearGradient id="gr10" x1="0" y1="0" x2="1" y2="1"><stop offset="0" stop-color="#d0f060"/><stop offset="0.6" stop-color="#a4d428"/><stop offset="1" stop-color="#86b818"/></linearGradient>
</defs>
<path d="M19 24 Q19 21 40 21 Q61 21 61 24 L61 37.5 L19 37.5Z" fill="url(#ds10)"/>
<path d="M19 24 Q19 21 40 21 Q61 21 61 24 L61 37.5 L19 37.5Z" fill="url(#dv10)"/>
<rect x="19.5" y="37.5" width="41" height="6.5" rx="2.5" fill="url(#bb10)"/>
<path d="M19 46 Q19 44.5 40 44.5 Q61 44.5 61 46 L61 59.5 L19 59.5Z" fill="url(#ds10)"/>
<path d="M19 46 Q19 44.5 40 44.5 Q61 44.5 61 46 L61 59.5 L19 59.5Z" fill="url(#dv10)"/>
<rect x="19.5" y="59.5" width="41" height="7" rx="2.5" fill="url(#bb10)"/>
<path d="M19 68.5 Q19 67 40 67 Q61 67 61 68.5 L61 80 Q61 82 40 82 Q19 82 19 80Z" fill="url(#ds10)"/>
<path d="M19 68.5 Q19 67 40 67 Q61 67 61 68.5 L61 80 Q61 82 40 82 Q19 82 19 80Z" fill="url(#dv10)"/>
<rect x="47" y="15.8" width="41" height="32" rx="1.5" fill="url(#pn10)" stroke="#9a9a9a" stroke-width="0.6"/>
<path d="M47.5 30 L58 16.2 L47.5 16.2Z" fill="#fff" opacity="0.25"/>
<circle cx="74" cy="19.6" r="1.5" fill="#e04a30"/><circle cx="79.2" cy="19.6" r="1.5" fill="#e8a030"/><circle cx="84" cy="19.6" r="1.5" fill="#50c030"/>
<circle cx="55.4" cy="26.6" r="2.7" fill="#f0c8a8"/>
<path d="M49.3 35.5 Q49.3 30.6 53.5 30.6 L57.3 30.6 Q61.5 30.6 61.5 35.5 Q61.5 39.2 55.4 39.2 Q49.3 39.2 49.3 35.5Z" fill="#2a9ee0"/>
<path d="M54.4 30.6 L55.4 32.8 L56.4 30.6Z" fill="#fff"/>
<rect x="65.3" y="24.8" width="20.2" height="5.6" fill="#fff" stroke="#a8a8a8" stroke-width="0.5"/>
<path d="M68 27.6 H83.5" stroke="#b8b8b8" stroke-width="1.2" stroke-dasharray="2.5 0.8"/>
<rect x="65.3" y="33" width="20.2" height="5.4" fill="#fff" stroke="#a8a8a8" stroke-width="0.5"/>
<path d="M67.5 35.7 H84.5" stroke="#333" stroke-width="1.3" stroke-dasharray="1.3 1.4"/>
<path d="M49 43.3 H63.5" stroke="#333" stroke-width="1"/>
<rect x="65" y="41.6" width="3.2" height="3.2" fill="#fff"/>
<rect x="73.2" y="41.8" width="12.3" height="3.6" rx="0.8" fill="#2a9ee0"/>
<path d="M82.5 75.5 L92.5 89" stroke="#2e2e2e" stroke-width="6.5" stroke-linecap="round"/>
<path d="M82.5 75.5 L92.5 89" stroke="#c4c4c4" stroke-width="3.6" stroke-linecap="round"/>
<circle cx="68.3" cy="66" r="11.5" fill="url(#ln10)"/>
<circle cx="68.3" cy="66" r="13.8" fill="none" stroke="url(#gr10)" stroke-width="5.4"/>
<circle cx="68.3" cy="66" r="16.6" fill="none" stroke="#72a414" stroke-width="0.6"/>
<circle cx="68.3" cy="66" r="11" fill="none" stroke="#80b020" stroke-width="0.6"/>
</svg>
<svg style="left:40px;top:180px" width="12.0" height="10.0" viewBox="0 0 12 10">
<ellipse cx="5.6" cy="3.6" rx="2.1" ry="3.2" fill="#9a6a40"/>
<path d="M0.3 10 Q0.3 5.6 2.6 5.6 Q5 5.6 5 10Z" fill="#f2f2f2"/>
<rect x="2.3" y="6" width="0.7" height="4" fill="#7ab0d0"/>
<circle cx="2.6" cy="4.2" r="1.5" fill="#d8a070"/>
<path d="M1.1 3.8 Q1.3 2.5 2.6 2.5 Q4 2.5 4.1 3.8Z" fill="#8a5a30"/>
<path d="M3.9 10 Q3.9 5 5.6 5 Q7.4 5 7.4 10Z" fill="#3c3c3c"/>
<circle cx="5.6" cy="2.4" r="1.4" fill="#e0b08a"/>
<path d="M6 10 Q6 6 8.2 6 Q10.6 6 10.6 10Z" fill="#2a2a30"/>
<path d="M7.2 10 Q7.2 6.6 8.2 6.6 Q9.3 6.6 9.3 10Z" fill="#2848a8"/>
<circle cx="8.1" cy="4.4" r="1.6" fill="#d49a70"/>
<path d="M6.5 4 Q6.6 2.7 8.1 2.7 Q9.7 2.7 9.7 4Z" fill="#9a6a40"/>
</svg>
<div class="t" style="left:52.9px;top:183px;font-size:9px;letter-spacing:-0.48px;color:#15204a">[ Daten exportieren ]</div>
<div style="left:604px;top:178px;width:20px;height:13px;background:linear-gradient(#d04a3c,#a41e18 60%,#8e1410);"><svg style="left:0;top:0" width="20" height="13"><path d="M7.390000000000001 3.71 L12.61 9.29 M12.61 3.71 L7.390000000000001 9.29" stroke="#fff" stroke-width="1.8"/></svg></div>
<div class="t" style="left:169.8px;top:199.8px;font-size:9px;letter-spacing:0.5px;font-weight:bold;color:#111">Mitgliederdaten exportieren</div>
<div class="t" style="left:169.8px;top:218.9px;font-size:8.5px;letter-spacing:-0.05px;">Schnittstelle:</div>
<div style="left:229px;top:216.6px;width:253px;height:13.2px;background:linear-gradient(#f2f2f2,#e4e4e4);border:1px solid #adadad"></div>
<div class="t" style="left:232.8px;top:218.9px;font-size:8.5px;letter-spacing:-0.05px;">Datenaustausch Fibu</div>
<svg style="left:474.5px;top:222px" width="4" height="3"><path d="M0 0 L4.2 0 L2.1 2.4Z" fill="#111"/></svg>
<div class="t" style="left:169.8px;top:244.6px;font-size:8.5px;letter-spacing:-0.05px;">Ziehen Sie die gewünschten Felder von der linken Liste via Drag &amp; Drop in die rechte Liste.</div>
<div style="left:170px;top:262px;width:191px;height:238px;background:#fff;border:1px solid #8c8c8c;border-top-color:#505050;border-bottom-color:#606060"></div>
<div style="left:171px;top:263px;width:189px;height:15px;background:#c6e1fb;border-bottom:1px solid #a5bcd4"></div>
<div class="t" style="left:170px;top:266.3px;font-size:8.5px;letter-spacing:-0.05px;width:191px;text-align:center;color:#2a3550">verfügbare Felder</div>
<div style="left:0;top:0;width:1010px;height:499px;overflow:hidden">
<div style="left:171px;top:278.00px;width:177px;height:12.42px;background:#e6f5fd"></div>
<div class="t" style="left:172px;top:279.8px;font-size:8.5px;letter-spacing:0.1px;font-weight:bold;color:#111">Anschrift</div>
<div class="t" style="left:172px;top:292.22px;font-size:8.5px;letter-spacing:-0.05px;">Land</div>
<div style="left:171px;top:302.84px;width:177px;height:12.42px;background:#e6f5fd"></div>
<div class="t" style="left:172px;top:304.64px;font-size:8.5px;letter-spacing:0.1px;font-weight:bold;color:#111">Stammdaten</div>
<div class="t" style="left:172px;top:317.06px;font-size:8.5px;letter-spacing:-0.05px;">Abteilung</div>
<div class="t" style="left:172px;top:329.48px;font-size:8.5px;letter-spacing:-0.05px;">Alter (jahrgangsbezogen)</div>
<div class="t" style="left:172px;top:341.9px;font-size:8.5px;letter-spacing:-0.05px;">Anrede</div>
<div style="left:171px;top:352.52px;width:177px;height:12.42px;background:#fde0c2"></div>
<div class="t" style="left:172px;top:354.32px;font-size:8.5px;letter-spacing:-0.05px;">Austritt am</div>
<div class="t" style="left:172px;top:366.74px;font-size:8.5px;letter-spacing:-0.05px;">Bankname</div>
<div class="t" style="left:172px;top:379.16px;font-size:8.5px;letter-spacing:-0.05px;">Beitrag als Spende verrechnen</div>
<div class="t" style="left:172px;top:391.58px;font-size:8.5px;letter-spacing:-0.05px;">Beitragskennung</div>
<div class="t" style="left:172px;top:404.0px;font-size:8.5px;letter-spacing:-0.05px;">Beitragszahler</div>
<div class="t" style="left:172px;top:416.42px;font-size:8.5px;letter-spacing:-0.05px;">Bemerkungen</div>
<div class="t" style="left:172px;top:428.84px;font-size:8.5px;letter-spacing:-0.05px;">Betreuer</div>
<div class="t" style="left:172px;top:441.26px;font-size:8.5px;letter-spacing:-0.05px;">Blz</div>
<div class="t" style="left:172px;top:453.68px;font-size:8.5px;letter-spacing:-0.05px;">Briefanrede</div>
<div class="t" style="left:172px;top:466.1px;font-size:8.5px;letter-spacing:-0.05px;">E-Mail Adresse</div>
<div class="t" style="left:172px;top:478.52px;font-size:8.5px;letter-spacing:-0.05px;">E-Mail für News</div>
<div class="t" style="left:172px;top:490.94px;font-size:8.5px;letter-spacing:-0.05px;">EMail-Info</div>
</div>
<div style="left:348px;top:278px;width:12px;height:221px;background:#dcdcdc;border-left:1px solid #a9b9c9"></div>
<div style="left:348px;top:278px;width:12px;height:37px;background:#c6e1fb;border-left:1px solid #a9b9c9"></div>
<div style="left:348px;top:288px;width:12px;height:1px;background:#a5bcd4"></div>
<svg style="left:352px;top:282px" width="5" height="3"><path d="M0 2 L2.1 0 L4.2 2Z" fill="#111"/></svg>
<div style="left:348px;top:489px;width:12px;height:10px;background:#c6e1fb;border-left:1px solid #a9b9c9;border-top:1px solid #a5bcd4"></div>
<svg style="left:352px;top:493.5px" width="5" height="3"><path d="M0 0 L2.1 2 L4.2 0Z" fill="#111"/></svg>
<div style="left:398px;top:262px;width:214px;height:238px;background:#fff;border:1px solid #8c8c8c;border-top-color:#505050;border-bottom-color:#606060"></div>
<div style="left:399px;top:263px;width:212px;height:15px;background:#c6e1fb;border-bottom:1px solid #a5bcd4"></div>
<div class="t" style="left:398px;top:266.3px;font-size:8.5px;letter-spacing:-0.05px;width:214px;text-align:center;color:#2a3550">ausgewählte Felder</div>
<div style="left:0;top:0;width:1010px;height:499px;overflow:hidden">
<div style="left:399px;top:278.00px;width:22px;height:12.42px;background:#c6e1fb;border-bottom:1px solid #a5bcd4;border-right:1px solid #a5bcd4"></div>
<div class="t" style="left:399px;top:279.8px;font-size:8.5px;letter-spacing:0.1px;width:21px;text-align:center;">1</div>
<div class="t" style="left:423px;top:279.8px;font-size:8.5px;letter-spacing:-0.05px;">Mitglieds-Nr.</div>
<div style="left:399px;top:290.42px;width:22px;height:12.42px;background:#c6e1fb;border-bottom:1px solid #a5bcd4;border-right:1px solid #a5bcd4"></div>
<div class="t" style="left:399px;top:292.22px;font-size:8.5px;letter-spacing:0.1px;width:21px;text-align:center;">2</div>
<div class="t" style="left:423px;top:292.22px;font-size:8.5px;letter-spacing:-0.05px;">Anrede</div>
<div style="left:399px;top:302.84px;width:22px;height:12.42px;background:#c6e1fb;border-bottom:1px solid #a5bcd4;border-right:1px solid #a5bcd4"></div>
<div class="t" style="left:399px;top:304.64px;font-size:8.5px;letter-spacing:0.1px;width:21px;text-align:center;">3</div>
<div class="t" style="left:423px;top:304.64px;font-size:8.5px;letter-spacing:-0.05px;">Vorname Name</div>
<div style="left:399px;top:315.26px;width:22px;height:12.42px;background:#c6e1fb;border-bottom:1px solid #a5bcd4;border-right:1px solid #a5bcd4"></div>
<div class="t" style="left:399px;top:317.06px;font-size:8.5px;letter-spacing:0.1px;width:21px;text-align:center;">4</div>
<div class="t" style="left:423px;top:317.06px;font-size:8.5px;letter-spacing:-0.05px;">Namenszusatz</div>
<div style="left:399px;top:327.68px;width:22px;height:12.42px;background:#c6e1fb;border-bottom:1px solid #a5bcd4;border-right:1px solid #a5bcd4"></div>
<div class="t" style="left:399px;top:329.48px;font-size:8.5px;letter-spacing:0.1px;width:21px;text-align:center;">5</div>
<div class="t" style="left:423px;top:329.48px;font-size:8.5px;letter-spacing:-0.05px;">Straße</div>
<div style="left:399px;top:340.10px;width:22px;height:12.42px;background:#c6e1fb;border-bottom:1px solid #a5bcd4;border-right:1px solid #a5bcd4"></div>
<div class="t" style="left:399px;top:341.9px;font-size:8.5px;letter-spacing:0.1px;width:21px;text-align:center;">6</div>
<div class="t" style="left:423px;top:341.9px;font-size:8.5px;letter-spacing:-0.05px;">Plz</div>
<div style="left:399px;top:352.52px;width:22px;height:12.42px;background:#c6e1fb;border-bottom:1px solid #a5bcd4;border-right:1px solid #a5bcd4"></div>
<div class="t" style="left:399px;top:354.32px;font-size:8.5px;letter-spacing:0.1px;width:21px;text-align:center;">7</div>
<div class="t" style="left:423px;top:354.32px;font-size:8.5px;letter-spacing:-0.05px;">Ort</div>
<div style="left:399px;top:364.94px;width:22px;height:12.42px;background:#c6e1fb;border-bottom:1px solid #a5bcd4;border-right:1px solid #a5bcd4"></div>
<div class="t" style="left:399px;top:366.74px;font-size:8.5px;letter-spacing:0.1px;width:21px;text-align:center;">8</div>
<div class="t" style="left:423px;top:366.74px;font-size:8.5px;letter-spacing:-0.05px;">Aktiv/Passiv</div>
<div style="left:399px;top:377.36px;width:22px;height:12.42px;background:#c6e1fb;border-bottom:1px solid #a5bcd4;border-right:1px solid #a5bcd4"></div>
<div class="t" style="left:399px;top:379.16px;font-size:8.5px;letter-spacing:0.1px;width:21px;text-align:center;">9</div>
<div class="t" style="left:423px;top:379.16px;font-size:8.5px;letter-spacing:-0.05px;">BIC</div>
<div style="left:399px;top:389.78px;width:22px;height:12.42px;background:#c6e1fb;border-bottom:1px solid #a5bcd4;border-right:1px solid #a5bcd4"></div>
<div class="t" style="left:399px;top:391.58px;font-size:8.5px;letter-spacing:0.1px;width:21px;text-align:center;">10</div>
<div class="t" style="left:423px;top:391.58px;font-size:8.5px;letter-spacing:-0.05px;">IBAN Kto.</div>
<div style="left:399px;top:402.20px;width:22px;height:12.42px;background:#c6e1fb;border-bottom:1px solid #a5bcd4;border-right:1px solid #a5bcd4"></div>
<div class="t" style="left:399px;top:404.0px;font-size:8.5px;letter-spacing:0.1px;width:21px;text-align:center;">11</div>
<div class="t" style="left:423px;top:404.0px;font-size:8.5px;letter-spacing:-0.05px;">Konto-Inh.</div>
<div style="left:399px;top:414.62px;width:22px;height:12.42px;background:#c6e1fb;border-bottom:1px solid #a5bcd4;border-right:1px solid #a5bcd4"></div>
<div class="t" style="left:399px;top:416.42px;font-size:8.5px;letter-spacing:0.1px;width:21px;text-align:center;">12</div>
<div class="t" style="left:423px;top:416.42px;font-size:8.5px;letter-spacing:-0.05px;">Letzte Buchung</div>
<div style="left:399px;top:427.04px;width:22px;height:12.42px;background:#c6e1fb;border-bottom:1px solid #a5bcd4;border-right:1px solid #a5bcd4"></div>
<div class="t" style="left:399px;top:428.84px;font-size:8.5px;letter-spacing:0.1px;width:21px;text-align:center;">13</div>
<div class="t" style="left:423px;top:428.84px;font-size:8.5px;letter-spacing:-0.05px;">Mahndatum</div>
<div style="left:399px;top:439.46px;width:22px;height:12.42px;background:#c6e1fb;border-bottom:1px solid #a5bcd4;border-right:1px solid #a5bcd4"></div>
<div class="t" style="left:399px;top:441.26px;font-size:8.5px;letter-spacing:0.1px;width:21px;text-align:center;">14</div>
<div class="t" style="left:423px;top:441.26px;font-size:8.5px;letter-spacing:-0.05px;">Mahnstufe</div>
<div style="left:399px;top:451.88px;width:22px;height:12.42px;background:#c6e1fb;border-bottom:1px solid #a5bcd4;border-right:1px solid #a5bcd4"></div>
<div class="t" style="left:399px;top:453.68px;font-size:8.5px;letter-spacing:0.1px;width:21px;text-align:center;">15</div>
<div class="t" style="left:423px;top:453.68px;font-size:8.5px;letter-spacing:-0.05px;">Mandatsdatum</div>
<div style="left:399px;top:464.30px;width:22px;height:12.42px;background:#c6e1fb;border-bottom:1px solid #a5bcd4;border-right:1px solid #a5bcd4"></div>
<div class="t" style="left:399px;top:466.1px;font-size:8.5px;letter-spacing:0.1px;width:21px;text-align:center;">16</div>
<div class="t" style="left:423px;top:466.1px;font-size:8.5px;letter-spacing:-0.05px;">Mandatsreferenz</div>
<div style="left:399px;top:476.72px;width:22px;height:12.42px;background:#c6e1fb;border-bottom:1px solid #a5bcd4;border-right:1px solid #a5bcd4"></div>
<div class="t" style="left:399px;top:478.52px;font-size:8.5px;letter-spacing:0.1px;width:21px;text-align:center;">17</div>
<div class="t" style="left:423px;top:478.52px;font-size:8.5px;letter-spacing:-0.05px;">Lastschriftfolge</div>
<div style="left:399px;top:489.14px;width:22px;height:12.42px;background:#c6e1fb;border-bottom:1px solid #a5bcd4;border-right:1px solid #a5bcd4"></div>
<div class="t" style="left:399px;top:490.94px;font-size:8.5px;letter-spacing:0.1px;width:21px;text-align:center;">18</div>
<div class="t" style="left:423px;top:490.94px;font-size:8.5px;letter-spacing:-0.05px;">Vereinsbank</div>
</div>
<div style="left:600px;top:278px;width:11px;height:221px;background:#c6e1fb;border-left:1px solid #a9b9c9"></div>
<div style="left:600px;top:288px;width:11px;height:1px;background:#a5bcd4"></div>
<svg style="left:603.5px;top:282px" width="5" height="3"><path d="M0 2 L2.1 0 L4.2 2Z" fill="#111"/></svg>
<div style="left:366px;top:340px;width:24px;height:15px;background:linear-gradient(#f4f4f4,#e2e2e2);border:1px solid #c4c4c4;"><svg style="left:9px;top:3.5px" width="6" height="8"><path d="M0.5 0 L5 3.8 L0.5 7.6Z" fill="#3a7ed8"/></svg></div>
<div style="left:366px;top:358.5px;width:24px;height:15.5px;background:linear-gradient(#f4f4f4,#e2e2e2);border:1px solid #c4c4c4;border-color:#d6d6d6"><svg style="left:9px;top:3.5px" width="6" height="8"><path d="M4.5 0.3 L0.8 3.8 L4.5 7.3Z" fill="#8a8a8a"/></svg></div>
<div style="left:366px;top:390px;width:24px;height:16px;background:linear-gradient(#f4f4f4,#e2e2e2);border:1px solid #c4c4c4;border-color:#d6d6d6"><svg style="left:9px;top:6px" width="6" height="4"><path d="M0 3 L3 0 L6 3Z" fill="#a0a0a0"/></svg></div>
<div style="left:366px;top:408.5px;width:24px;height:15.5px;background:linear-gradient(#f4f4f4,#e2e2e2);border:1px solid #c4c4c4;border-color:#d6d6d6"><div class="t" style="left:0px;top:0.5px;font-size:8.5px;letter-spacing:-0.05px;width:22px;text-align:center;color:#a8a8a8">...</div></div>
<div style="left:366px;top:427.3px;width:24px;height:15.7px;background:linear-gradient(#f4f4f4,#e2e2e2);border:1px solid #c4c4c4;border-color:#d6d6d6"><svg style="left:9px;top:6px" width="6" height="4"><path d="M0 0 L3 3 L6 0Z" fill="#909090"/></svg></div>
<div style="left:366px;top:464px;width:24px;height:15.3px;background:linear-gradient(#f4f4f4,#e2e2e2);border:1px solid #c4c4c4;"><svg style="left:8px;top:3.5px" width="8" height="8"><path d="M0.5 0 L5 3.8 L0.5 7.6Z" fill="#3a7ed8"/><rect x="5.3" y="0" width="1.8" height="7.6" fill="#3a7ed8"/></svg></div>
<div style="left:415px;top:512.3px;width:65px;height:15.2px;background:linear-gradient(#f4f4f4,#e2e2e2);border:1px solid #c4c4c4;border-color:#d4d4d4"><div class="t" style="left:0px;top:2.0px;font-size:8.5px;letter-spacing:-0.05px;width:63px;text-align:center;color:#a8a8a8"><u>Z</u>urück</div></div>
<div style="left:485px;top:512.3px;width:65px;height:15.2px;background:linear-gradient(#f4f4f4,#e2e2e2);border:1px solid #c4c4c4;border-color:#3c7fd6"><div style="left:2px;top:2px;right:2px;bottom:2px;border:1px dotted #555"></div><div class="t" style="left:0px;top:2.0px;font-size:8.5px;letter-spacing:-0.05px;width:63px;text-align:center;color:#111"><u>W</u>eiter</div></div>
<div style="left:554px;top:512.3px;width:65px;height:15.2px;background:linear-gradient(#f4f4f4,#e2e2e2);border:1px solid #c4c4c4;"></div>
<div style="left:560px;top:309px;width:445px;height:269px;background:#6aa9e9"></div>
<div style="left:564px;top:322px;width:437px;height:253px;background:#fff"></div>
<div style="left:564px;top:322px;width:89px;height:235px;background:#204f9e"></div>
<div style="left:564px;top:557px;width:437px;height:18px;background:#f0f0f0"></div>
<svg style="left:564px;top:322px" width="75.0" height="75.0" viewBox="0 0 100 100">
<defs>
<linearGradient id="ds075" x1="0" x2="1"><stop offset="0" stop-color="#8a8a8a"/><stop offset="0.12" stop-color="#cfcfcf"/><stop offset="0.4" stop-color="#f6f6f6"/><stop offset="0.75" stop-color="#c4c4c4"/><stop offset="1" stop-color="#7a7a7a"/></linearGradient>
<linearGradient id="dv075" x1="0" y1="0" x2="0" y2="1"><stop offset="0" stop-color="#fff" stop-opacity="0.5"/><stop offset="0.3" stop-color="#fff" stop-opacity="0"/><stop offset="0.8" stop-color="#000" stop-opacity="0"/><stop offset="1" stop-color="#000" stop-opacity="0.25"/></linearGradient>
<linearGradient id="bb075" x1="0" x2="1"><stop offset="0" stop-color="#0e4c94"/><stop offset="0.45" stop-color="#3aa4e8"/><stop offset="0.7" stop-color="#2a8ad4"/><stop offset="1" stop-color="#0e4c94"/></linearGradient>
<linearGradient id="pn075" x1="0" y1="0" x2="0" y2="1"><stop offset="0" stop-color="#f2f2f2"/><stop offset="1" stop-color="#c0c0c0"/></linearGradient>
<linearGradient id="ln075" x1="0" y1="0" x2="0" y2="1"><stop offset="0" stop-color="#fafafa"/><stop offset="0.42" stop-color="#e6e6e6"/><stop offset="0.5" stop-color="#c4c4c4"/><stop offset="1" stop-color="#dedede"/></linearGradient>
<linearGradient id="gr075" x1="0" y1="0" x2="1" y2="1"><stop offset="0" stop-color="#d0f060"/><stop offset="0.6" stop-color="#a4d428"/><stop offset="1" stop-color="#86b818"/></linearGradient>
</defs>
<path d="M19 24 Q19 21 40 21 Q61 21 61 24 L61 37.5 L19 37.5Z" fill="url(#ds075)"/>
<path d="M19 24 Q19 21 40 21 Q61 21 61 24 L61 37.5 L19 37.5Z" fill="url(#dv075)"/>
<rect x="19.5" y="37.5" width="41" height="6.5" rx="2.5" fill="url(#bb075)"/>
<path d="M19 46 Q19 44.5 40 44.5 Q61 44.5 61 46 L61 59.5 L19 59.5Z" fill="url(#ds075)"/>
<path d="M19 46 Q19 44.5 40 44.5 Q61 44.5 61 46 L61 59.5 L19 59.5Z" fill="url(#dv075)"/>
<rect x="19.5" y="59.5" width="41" height="7" rx="2.5" fill="url(#bb075)"/>
<path d="M19 68.5 Q19 67 40 67 Q61 67 61 68.5 L61 80 Q61 82 40 82 Q19 82 19 80Z" fill="url(#ds075)"/>
<path d="M19 68.5 Q19 67 40 67 Q61 67 61 68.5 L61 80 Q61 82 40 82 Q19 82 19 80Z" fill="url(#dv075)"/>
<rect x="47" y="15.8" width="41" height="32" rx="1.5" fill="url(#pn075)" stroke="#9a9a9a" stroke-width="0.6"/>
<path d="M47.5 30 L58 16.2 L47.5 16.2Z" fill="#fff" opacity="0.25"/>
<circle cx="74" cy="19.6" r="1.5" fill="#e04a30"/><circle cx="79.2" cy="19.6" r="1.5" fill="#e8a030"/><circle cx="84" cy="19.6" r="1.5" fill="#50c030"/>
<circle cx="55.4" cy="26.6" r="2.7" fill="#f0c8a8"/>
<path d="M49.3 35.5 Q49.3 30.6 53.5 30.6 L57.3 30.6 Q61.5 30.6 61.5 35.5 Q61.5 39.2 55.4 39.2 Q49.3 39.2 49.3 35.5Z" fill="#2a9ee0"/>
<path d="M54.4 30.6 L55.4 32.8 L56.4 30.6Z" fill="#fff"/>
<rect x="65.3" y="24.8" width="20.2" height="5.6" fill="#fff" stroke="#a8a8a8" stroke-width="0.5"/>
<path d="M68 27.6 H83.5" stroke="#b8b8b8" stroke-width="1.2" stroke-dasharray="2.5 0.8"/>
<rect x="65.3" y="33" width="20.2" height="5.4" fill="#fff" stroke="#a8a8a8" stroke-width="0.5"/>
<path d="M67.5 35.7 H84.5" stroke="#333" stroke-width="1.3" stroke-dasharray="1.3 1.4"/>
<path d="M49 43.3 H63.5" stroke="#333" stroke-width="1"/>
<rect x="65" y="41.6" width="3.2" height="3.2" fill="#fff"/>
<rect x="73.2" y="41.8" width="12.3" height="3.6" rx="0.8" fill="#2a9ee0"/>
<path d="M82.5 75.5 L92.5 89" stroke="#2e2e2e" stroke-width="6.5" stroke-linecap="round"/>
<path d="M82.5 75.5 L92.5 89" stroke="#c4c4c4" stroke-width="3.6" stroke-linecap="round"/>
<circle cx="68.3" cy="66" r="11.5" fill="url(#ln075)"/>
<circle cx="68.3" cy="66" r="13.8" fill="none" stroke="url(#gr075)" stroke-width="5.4"/>
<circle cx="68.3" cy="66" r="16.6" fill="none" stroke="#72a414" stroke-width="0.6"/>
<circle cx="68.3" cy="66" r="11" fill="none" stroke="#80b020" stroke-width="0.6"/>
</svg>
<svg style="left:564px;top:311px" width="9.0" height="7.5" viewBox="0 0 12 10">
<ellipse cx="5.6" cy="3.6" rx="2.1" ry="3.2" fill="#9a6a40"/>
<path d="M0.3 10 Q0.3 5.6 2.6 5.6 Q5 5.6 5 10Z" fill="#f2f2f2"/>
<rect x="2.3" y="6" width="0.7" height="4" fill="#7ab0d0"/>
<circle cx="2.6" cy="4.2" r="1.5" fill="#d8a070"/>
<path d="M1.1 3.8 Q1.3 2.5 2.6 2.5 Q4 2.5 4.1 3.8Z" fill="#8a5a30"/>
<path d="M3.9 10 Q3.9 5 5.6 5 Q7.4 5 7.4 10Z" fill="#3c3c3c"/>
<circle cx="5.6" cy="2.4" r="1.4" fill="#e0b08a"/>
<path d="M6 10 Q6 6 8.2 6 Q10.6 6 10.6 10Z" fill="#2a2a30"/>
<path d="M7.2 10 Q7.2 6.6 8.2 6.6 Q9.3 6.6 9.3 10Z" fill="#2848a8"/>
<circle cx="8.1" cy="4.4" r="1.6" fill="#d49a70"/>
<path d="M6.5 4 Q6.6 2.7 8.1 2.7 Q9.7 2.7 9.7 4Z" fill="#9a6a40"/>
</svg>
<div class="t" style="left:573.5px;top:314.2px;font-size:6.75px;letter-spacing:-0.36px;color:#15204a">[ Daten exportieren ]</div>
<div style="left:986px;top:310px;width:15px;height:10px;background:linear-gradient(#d04a3c,#a41e18 60%,#8e1410);"><svg style="left:0;top:0" width="15" height="10"><path d="M5.470000000000001 2.83 L9.53 7.17 M9.53 2.83 L5.470000000000001 7.17" stroke="#fff" stroke-width="1.4000000000000001"/></svg></div>
<div class="t" style="left:661px;top:326.8px;font-size:6.75px;letter-spacing:0.38px;font-weight:bold;color:#111">Datei-Format</div>
<div class="t" style="left:661px;top:341px;font-size:6.4px;letter-spacing:-0.04px;">Datei-Typ:</div>
<div style="left:705.4px;top:339px;width:127.3px;height:9.5px;background:linear-gradient(#f2f2f2,#e4e4e4);border:1px solid #b0b0b0"></div>
<div class="t" style="left:708.5px;top:341px;font-size:6.4px;letter-spacing:-0.04px;">Microsoft Access (*.mdb)</div>
<svg style="left:827.5px;top:343px" width="3" height="2"><path d="M0 0 L3.2 0 L1.6 1.8Z" fill="#111"/></svg>
<div class="t" style="left:661px;top:354px;font-size:6.4px;letter-spacing:-0.04px;">Dateiname:</div>
<div style="left:705.4px;top:352.5px;width:117.6px;height:9.1px;background:#fdeab6"></div>
<div class="t" style="left:705.8px;top:354px;font-size:6.4px;letter-spacing:-0.04px;">ExportFibu.mdb</div>
<div style="left:823px;top:352.6px;width:9px;height:9px;background:#cdcdcd"><svg style="left:0;top:0" width="9" height="9" viewBox="0 0 9 9"><path d="M0.8 2 Q0.8 1 1.8 1 L3.5 1 L4.3 2 L7.6 2 L7.6 8 L0.8 8Z" fill="#e8e070"/><path d="M0.8 3.2 L8.4 3.2 L8.4 8.2 L0.8 8.2Z" fill="#f6f070"/><path d="M8.4 3.2 L8.4 8.2 L0.8 8.2 L0.8 7.4 L7.6 7.4 L7.6 3.2Z" fill="#3a3a18"/><path d="M4 6.5 L7 6.5" stroke="#f0b070" stroke-width="0.8"/></svg></div>
<div class="t" style="left:661px;top:366.5px;font-size:6.4px;letter-spacing:-0.04px;">Ordner:</div>
<div class="t" style="left:705.4px;top:366.5px;font-size:6.4px;letter-spacing:-0.04px;">H:\Benutzer\Dieter Otter\Dokumente</div>
<div style="left:705.4px;top:372.7px;width:275.6px;height:0.8px;background:#c4c4c4"></div>
<div style="left:980.4px;top:365px;width:9.2px;height:8.7px;background:#cdcdcd"><svg style="left:0;top:0" width="9.2" height="8.7" viewBox="0 0 9 9"><path d="M0.8 2 Q0.8 1 1.8 1 L3.5 1 L4.3 2 L7.6 2 L7.6 8 L0.8 8Z" fill="#e8e070"/><path d="M0.8 3.2 L8.4 3.2 L8.4 8.2 L0.8 8.2Z" fill="#f6f070"/><path d="M8.4 3.2 L8.4 8.2 L0.8 8.2 L0.8 7.4 L7.6 7.4 L7.6 3.2Z" fill="#3a3a18"/><path d="M4 6.5 L7 6.5" stroke="#f0b070" stroke-width="0.8"/></svg></div>
<div style="left:705.6px;top:383.4px;width:161.4px;height:54.8px;border:1px solid #d0d0d0;border-radius:2px"></div>
<div style="left:708px;top:380px;width:60px;height:7px;background:#fff"></div>
<div class="t" style="left:710px;top:380.8px;font-size:6.4px;letter-spacing:-0.04px;color:#c0c0c0">Export-Einstellungen</div>
<div class="t" style="left:712.6px;top:395.8px;font-size:6.4px;letter-spacing:-0.04px;">Trennzeichen:</div>
<div style="left:770.5px;top:394px;width:86.5px;height:9.5px;background:#e8e8e8;border:1px solid #dcdcdc"></div>
<div class="t" style="left:773.5px;top:395.8px;font-size:6.4px;letter-spacing:-0.04px;color:#a8a8a8">Semikolon</div>
<svg style="left:851.5px;top:398px" width="3" height="2"><path d="M0 0 L3 0 L1.5 1.7Z" fill="#111"/></svg>
<div class="t" style="left:712.6px;top:409.6px;font-size:6.4px;letter-spacing:-0.04px;">Feldbegrenzung:</div>
<div style="left:770.5px;top:407.6px;width:86.5px;height:9.5px;background:#e8e8e8;border:1px solid #dcdcdc"></div>
<div class="t" style="left:773.5px;top:409.6px;font-size:6.4px;letter-spacing:-0.04px;color:#a8a8a8">Anführungszeichen</div>
<svg style="left:851.5px;top:411.6px" width="3" height="2"><path d="M0 0 L3 0 L1.5 1.7Z" fill="#111"/></svg>
<div style="left:712.2px;top:425px;width:6.8px;height:6.8px;border:1px solid #8aa0c0;background:#fff"><svg style="left:0;top:0" width="4" height="4" viewBox="0 0 4 4"><path d="M0.4 2 L1.5 3.1 L3.6 0.6" stroke="#7a8aa0" stroke-width="0.8" fill="none"/></svg></div>
<div class="t" style="left:720.5px;top:425.8px;font-size:6.4px;letter-spacing:-0.04px;color:#c0c0c0">Erste Zeile enthält Feldbeschreibung</div>
<div class="t" style="left:661px;top:445.8px;font-size:6.3px;letter-spacing:0.15px;font-weight:bold;color:#111">Einstellungen speichern</div>
<div class="t" style="left:661px;top:456.2px;font-size:6.4px;letter-spacing:-0.04px;">Klicken Sie auf 'Speichern', um die Feldauswahl, sowie die Export-Einstellungen</div>
<div class="t" style="left:661px;top:463px;font-size:6.4px;letter-spacing:-0.04px;">für wiederkehrende und gleichbleibende Datenexport-Vorgänge  zu speichern.</div>
<div style="left:661px;top:473px;width:55px;height:11.5px;background:linear-gradient(#f4f4f4,#e2e2e2);border:1px solid #c4c4c4;"><div class="t" style="left:0px;top:3px;font-size:6.4px;letter-spacing:-0.04px;width:53px;text-align:center;"><u>S</u>peichern</div></div>
<div style="left:845.3px;top:560.4px;width:48.3px;height:11.8px;background:linear-gradient(#f4f4f4,#e2e2e2);border:1px solid #c4c4c4;"><div class="t" style="left:0px;top:2.6px;font-size:6.4px;letter-spacing:-0.04px;width:46.30000000000007px;text-align:center;"><u>Z</u>urück</div></div>
<div style="left:897.3px;top:560.4px;width:48.2px;height:11.8px;background:linear-gradient(#f4f4f4,#e2e2e2);border:1px solid #c4c4c4;"><div class="t" style="left:0px;top:2.6px;font-size:6.4px;letter-spacing:-0.04px;width:46.200000000000045px;text-align:center;"><u>F</u>ertig</div></div>
<div style="left:949.3px;top:560.4px;width:48.2px;height:11.8px;background:linear-gradient(#f4f4f4,#e2e2e2);border:1px solid #c4c4c4;"><div class="t" style="left:0px;top:2.6px;font-size:6.4px;letter-spacing:-0.04px;width:46.200000000000045px;text-align:center;"><u>A</u>bbrechen</div></div></body></html>
